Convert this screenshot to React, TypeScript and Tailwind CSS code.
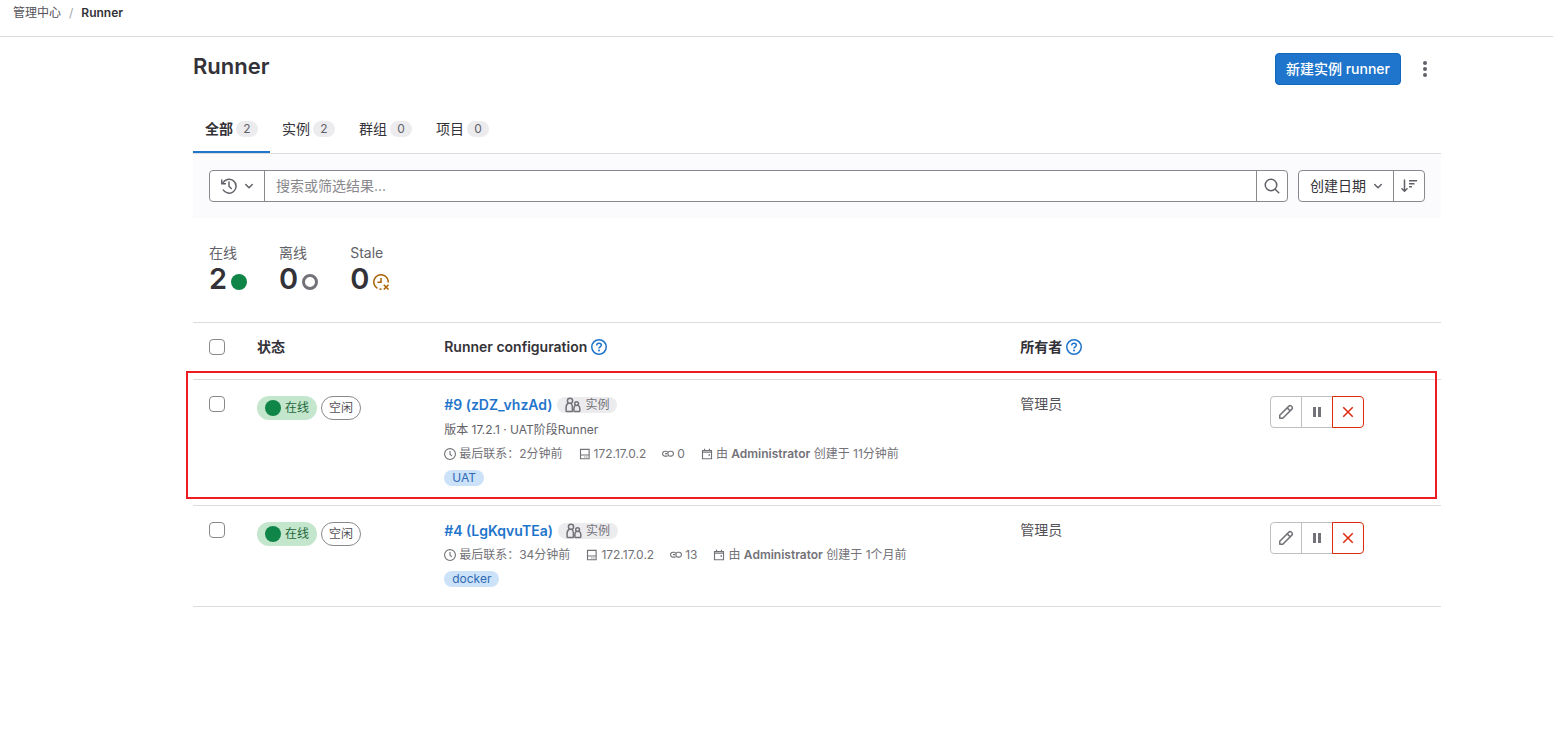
import { useState } from "react";
import type { ReactNode } from "react";

interface Runner {
  id: number;
  token: string;
  version?: string;
  description?: string;
  contacted: string;
  ip: string;
  jobs: number;
  created: string;
  tag: string;
}

const runners: Runner[] = [
  {
    id: 9,
    token: "zDZ_vhzAd",
    version: "17.2.1",
    description: "UAT阶段Runner",
    contacted: "2分钟前",
    ip: "172.17.0.2",
    jobs: 0,
    created: "11分钟前",
    tag: "UAT",
  },
  {
    id: 4,
    token: "LgKqvuTEa",
    contacted: "34分钟前",
    ip: "172.17.0.2",
    jobs: 13,
    created: "1个月前",
    tag: "docker",
  },
];

const tabs = [
  { name: "全部", count: 2 },
  { name: "实例", count: 2 },
  { name: "群组", count: 0 },
  { name: "项目", count: 0 },
];

interface IconProps {
  className?: string;
  children: ReactNode;
}

const Icon = ({ className = "size-4", children }: IconProps) => (
  <svg
    viewBox="0 0 16 16"
    fill="none"
    stroke="currentColor"
    strokeWidth="1.5"
    className={`shrink-0 ${className}`}
    aria-hidden="true"
  >
    {children}
  </svg>
);

const ChevronIcon = ({ className }: { className?: string }) => (
  <Icon className={className}>
    <path d="M4.750 6.500 8 9.750l3.250-3.250" strokeLinecap="round" strokeLinejoin="round" />
  </Icon>
);

const HistoryIcon = () => (
  <Icon>
    <path d="M1.700 5.300A7 7 0 1 1 1.900 11.500" />
    <path d="M.75 1.500V5.750H5" />
    <path d="M8 4v4.250L10.250 10.500" strokeLinecap="round" />
  </Icon>
);

const SearchIcon = () => (
  <Icon>
    <circle cx="7" cy="7" r="5.750" />
    <path d="m11.250 11.250 3.500 3.500" strokeLinecap="round" />
  </Icon>
);

const SortIcon = () => (
  <Icon>
    <path d="M3.500 2v11M1 10.700l2.500 2.550L6 10.700" strokeLinecap="round" strokeLinejoin="round" />
    <path d="M8 2.750h8M8 5.750h5.500M8 8.750h3" />
  </Icon>
);

const StaleIcon = () => (
  <Icon>
    <path d="M15.250 8.500A7.250 7.250 0 1 0 4.500 14.350M6.500 15.100l2 .15" />
    <path d="M8 4v4.250H4.500" />
    <path d="m10.750 10.750 4.750 4.750M15.500 10.750l-4.750 4.750" />
  </Icon>
);

const HelpIcon = () => (
  <Icon className="size-4 text-[#1f75cb]">
    <circle cx="8" cy="8" r="7.250" />
    <path d="M5.700 6.500C5.700 5.200 6.700 4.300 8 4.300s2.300.8 2.300 2C10.300 7.800 8 7.800 8 9.500" />
    <circle cx="8" cy="11.500" r="1" fill="currentColor" stroke="none" />
  </Icon>
);

const UsersIcon = () => (
  <Icon>
    <circle cx="5" cy="3.750" r="2.600" />
    <path d="M3.500 6C1.800 6.900 1.100 8.600 1.100 10.500v3.250c0 .5.300.75.800.75H6.500c.6 0 .9-.3.900-.8V10c0-1.700-.6-3.100-1.900-4" />
    <circle cx="11.600" cy="6.600" r="1.900" />
    <path d="M10.400 8.300c-1.100.7-1.500 1.700-1.500 3v2.450c0 .5.300.75.800.75h4.200c.6 0 .9-.3.900-.8V11.300c0-1.400-.6-2.400-1.700-3" />
  </Icon>
);

const ClockIcon = () => (
  <Icon className="size-3">
    <circle cx="8" cy="8" r="7.250" />
    <path d="M8 4v4.250l2.500 2.250" />
  </Icon>
);

const DiskIcon = () => (
  <Icon className="size-3">
    <path d="M2 1.750h11.500v12.500H2zM2 9.250h11.500" />
    <path d="M7 12h1.500M9.750 12h1.500" />
  </Icon>
);

const LinkIcon = () => (
  <Icon className="size-3">
    <path d="M7.500 10.750H4a3.250 3.250 0 0 1 0-6.500h1.500A2.800 2.800 0 0 1 8 6M4 7.500h3" />
    <path d="M10 4.250h2a3.250 3.250 0 0 1 0 6.500h-2a2.500 2.500 0 0 1-2-2.500V7a2.500 2.500 0 0 1 2-2.750z" />
  </Icon>
);

const CalendarIcon = () => (
  <Icon className="size-3">
    <path d="M2 3.250h12v11H2zM4.750 1v3M11.250 1v3M2 5.500h12" />
    <path d="M10 9.250h2" strokeWidth="2" />
  </Icon>
);

const PencilIcon = () => (
  <Icon>
    <path
      d="M1.750 14.250v-3L10.900 2.100a1.600 1.600 0 0 1 2.300 0l.7.700a1.600 1.600 0 0 1 0 2.300L4.750 14.250zM9.200 3.900l2.900 2.900"
      strokeLinejoin="round"
    />
  </Icon>
);

const Stat = ({ label, value, icon }: { label: string; value: number; icon: ReactNode }) => (
  <div>
    <div className="text-sm leading-[22px] text-[#626168]">{label}</div>
    <div className="flex items-center gap-1 text-[29px] leading-[30px] font-semibold text-[#333238]">
      {value}
      <span className="pt-1.5">{icon}</span>
    </div>
  </div>
);

const Meta = ({ icon, children }: { icon: ReactNode; children: ReactNode }) => (
  <span className="flex items-center gap-[3px]">
    {icon}
    <span>{children}</span>
  </span>
);

const Checkbox = ({ label }: { label: string }) => (
  <input
    type="checkbox"
    aria-label={label}
    className="block size-4 appearance-none rounded border border-[#89888d] bg-white checked:border-[#1f75cb] checked:bg-[#1f75cb]"
  />
);

const RunnerRow = ({ runner }: { runner: Runner }) => (
  <tr className="border-b border-[#dcdcde] align-top">
    <td className="p-4">
      <Checkbox label={`选择 #${runner.id}`} />
    </td>
    <td className="p-4">
      <div className="flex gap-1 text-xs">
        <span className="flex h-6 items-center gap-1 rounded-full bg-[#c3e6cd] px-2 text-[#24663b]">
          <span className="size-4 rounded-full bg-[#108548]" />
          在线
        </span>
        <span className="flex h-6 items-center rounded-full border border-[#89888d] px-[7px] text-[#535158]">
          空闲
        </span>
      </div>
    </td>
    <td className="px-4 pt-[15px] pb-[17px]">
      <div className="flex flex-col gap-1 text-xs text-[#737278]">
        <div className="flex items-center gap-[5px] leading-5">
          <a href="#" className="text-sm leading-5 font-semibold text-[#1f75cb]">
            #{runner.id} ({runner.token})
          </a>
          <span className="flex h-4 items-center gap-1 rounded-full bg-[#ececef] px-2">
            <UsersIcon />
            实例
          </span>
        </div>
        {runner.version && (
          <div className="leading-[21px] text-[#626168]">
            版本 {runner.version} · {runner.description}
          </div>
        )}
        <div className="flex gap-4 leading-5">
          <Meta icon={<ClockIcon />}>最后联系：{runner.contacted}</Meta>
          <Meta icon={<DiskIcon />}>{runner.ip}</Meta>
          <Meta icon={<LinkIcon />}>{runner.jobs}</Meta>
          <Meta icon={<CalendarIcon />}>
            由 <b className="font-semibold">Administrator</b> 创建于 {runner.created}
          </Meta>
        </div>
        <div className="flex h-5 items-center">
          <span className="rounded-full bg-[#cbe2f9] px-2 text-[#2f68b4]">{runner.tag}</span>
        </div>
      </div>
    </td>
    <td className="px-4 py-3.5 text-[#535158]">管理员</td>
    <td className="p-4">
      <div className="flex text-[#737278]">
        <button
          type="button"
          aria-label="编辑"
          className="flex size-8 items-center justify-center rounded-l border border-[#bfbfc3]"
        >
          <PencilIcon />
        </button>
        <button
          type="button"
          aria-label="暂停"
          className="-ml-px flex size-8 items-center justify-center border border-[#bfbfc3]"
        >
          <Icon>
            <path d="M5.500 3v10M10.500 3v10" strokeWidth="3" />
          </Icon>
        </button>
        <button
          type="button"
          aria-label="删除"
          className="-ml-px flex size-8 items-center justify-center rounded-r border border-[#dd2b0e] text-[#dd2b0e]"
        >
          <Icon>
            <path d="m3.250 3.250 9.500 9.500M12.750 3.250l-9.500 9.500" />
          </Icon>
        </button>
      </div>
    </td>
  </tr>
);

const App = () => {
  const [activeTab, setActiveTab] = useState("全部");

  return (
    <div className="min-h-screen bg-white font-['Inter','Noto_Sans_CJK_SC',sans-serif] text-sm text-[#333238]">
      <nav className="flex h-[37px] items-start gap-2 border-b border-[#dcdcde] px-[13px] pt-[5px] text-xs">
        <a href="#" className="text-[#535158]">
          管理中心
        </a>
        <span className="text-[#a4a3a8]">/</span>
        <a href="#" className="font-semibold">
          Runner
        </a>
      </nav>

      <div className="pl-[81px]">
        <main className="mx-auto max-w-[1280px] px-4 pt-4">
          <header className="flex items-start justify-between">
            <h1 className="text-[22px] leading-[26px] font-semibold">Runner</h1>
            <div className="flex gap-2">
              <button
                type="button"
                className="h-8 rounded border border-[#1068bf] bg-[#1f75cb] px-2.5 font-medium text-white"
              >
                新建实例 runner
              </button>
              <button
                type="button"
                aria-label="更多操作"
                className="flex size-8 items-center justify-center text-[#626168]"
              >
                <svg viewBox="0 0 16 16" fill="currentColor" className="size-4">
                  <circle cx="8" cy="2" r="2" />
                  <circle cx="8" cy="8" r="2" />
                  <circle cx="8" cy="14" r="2" />
                </svg>
              </button>
            </div>
          </header>

          {/* Tabs */}
          <div className="mt-5 flex border-b border-[#dcdcde]">
            {tabs.map((tab) => (
              <button
                key={tab.name}
                type="button"
                onClick={() => setActiveTab(tab.name)}
                className={`flex h-12 items-center gap-[3px] border-b-2 px-3 pt-0.5 ${
                  activeTab === tab.name
                    ? "border-[#1f75cb] font-semibold"
                    : "border-transparent"
                }`}
              >
                {tab.name}
                <span className="min-w-[22px] rounded-full bg-[#ececef] px-[7px] text-xs font-normal text-[#626168]">
                  {tab.count}
                </span>
              </button>
            ))}
          </div>

          {/* Filter bar */}
          <div className="flex gap-2.5 bg-[#fbfafd] p-4">
            <div className="flex h-8 grow rounded border border-[#89888d] bg-white text-[#626168]">
              <button
                type="button"
                aria-label="最近搜索"
                className="flex w-[55px] items-center justify-center gap-1 border-r border-[#89888d] pl-1"
              >
                <HistoryIcon />
                <ChevronIcon />
              </button>
              <input
                type="text"
                aria-label="搜索"
                placeholder="搜索或筛选结果..."
                className="grow px-[11px] outline-none placeholder:text-[#89888d]"
              />
              <button
                type="button"
                aria-label="搜索"
                className="flex w-[31px] items-center justify-center border-l border-[#89888d]"
              >
                <SearchIcon />
              </button>
            </div>
            <div className="flex h-8 rounded border border-[#89888d] bg-white text-[#626168]">
              <div className="relative w-[95px] border-r border-[#89888d]">
                <select
                  aria-label="排序方式"
                  className="h-full w-full appearance-none pl-[11px] text-[#333238] outline-none"
                >
                  <option>创建日期</option>
                </select>
                <ChevronIcon className="pointer-events-none absolute top-[7px] right-[7px] size-4" />
              </div>
              <button
                type="button"
                aria-label="排序方向"
                className="flex w-[30px] items-center justify-center"
              >
                <SortIcon />
              </button>
            </div>
          </div>

          {/* Stats */}
          <div className="flex gap-8 px-4 pt-6 pb-7">
            <Stat
              label="在线"
              value={2}
              icon={<span className="block size-4 rounded-full bg-[#108548]" />}
            />
            <Stat
              label="离线"
              value={0}
              icon={<span className="block size-4 rounded-full border-[3px] border-[#737278]" />}
            />
            <Stat
              label="Stale"
              value={0}
              icon={
                <span className="block text-[#ab6100]">
                  <StaleIcon />
                </span>
              }
            />
          </div>

          <div className="relative">
            <table className="w-full table-fixed border-collapse border-t border-[#dcdcde] text-left">
              <thead>
                <tr className="h-[57px] border-b border-[#dcdcde] align-top">
                  <th className="w-12 p-4">
                    <Checkbox label="全选" />
                  </th>
                  <th className="w-[15%] px-4 py-3.5 font-semibold">状态</th>
                  <th className="px-4 py-3.5 font-semibold">
                    <span className="flex items-center gap-1">
                      Runner configuration <HelpIcon />
                    </span>
                  </th>
                  <th className="w-1/5 px-4 py-3.5 font-semibold">
                    <span className="flex items-center gap-1">
                      所有者 <HelpIcon />
                    </span>
                  </th>
                  <th className="w-[15%]" aria-label="操作" />
                </tr>
              </thead>
              <tbody>
                {runners.map((runner) => (
                  <RunnerRow key={runner.id} runner={runner} />
                ))}
              </tbody>
            </table>
            {/* Red marker around the newest runner */}
            <div className="pointer-events-none absolute top-[49px] right-1 -left-[7px] h-32 border-2 border-[#ed1c24]" />
          </div>
        </main>
      </div>
    </div>
  );
};

export default App;
